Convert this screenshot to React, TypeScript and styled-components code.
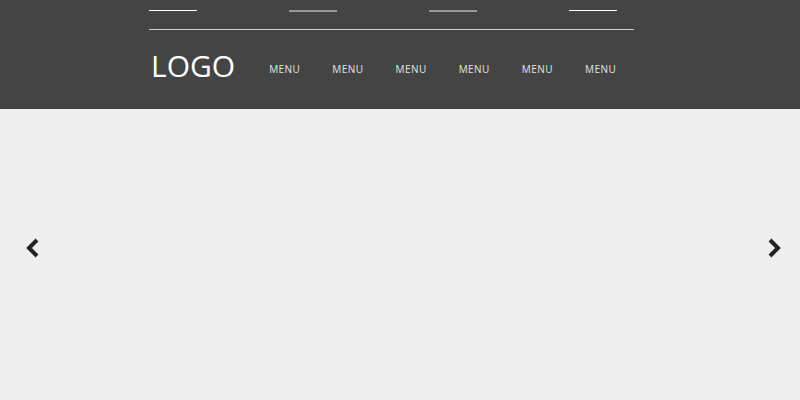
import styled, { createGlobalStyle } from "styled-components";

const GlobalStyle = createGlobalStyle`
  html, body {
    margin: 0;
    padding: 0;
    background: #eeeeee;
    font-family: "Open Sans", "Liberation Sans", sans-serif;
  }
`

const Header = styled.header`
  background: #444444;
  height: 109px;
  padding-left: 149px;
  box-sizing: border-box;
`

const HeaderInner = styled.div`
  width: 485px;
`

const TabRow = styled.div`
  display: grid;
  grid-template-columns: repeat(4, 140px);
  height: 30px;
  padding-top: 10px;
  box-sizing: border-box;
  border-bottom: 1px solid #cccccc;
`

const Tab = styled.span<{ active: boolean }>`
  display: block;
  width: 48px;
  height: ${({ active }) => active ? "1px" : "2px"};
  background: ${({ active }) => active ? "#ffffff" : "#999999"};
`

const NavRow = styled.div`
  display: flex;
  align-items: flex-start;
`

const Logo = styled.h1`
  margin: 21px 34px 0 2px;
  font-size: 30px;
  font-weight: 400;
  line-height: 30px;
  color: #ffffff;
`

const Menu = styled.nav`
  display: flex;
  gap: 32px;
  margin-top: 34px;
`

const MenuItem = styled.a`
  font-size: 10px;
  line-height: 10px;
  letter-spacing: 0.45px;
  color: #e4e4e4;
  cursor: pointer;
`

const Slider = styled.section`
  height: 291px;
  display: flex;
  align-items: center;
  justify-content: space-between;
  padding: 0 18px 14px 25px;
  box-sizing: border-box;
`

const Arrow = styled.button`
  border: none;
  background: none;
  padding: 0;
  display: flex;
  color: #222222;
  cursor: pointer;
`

const Chevron = ({ direction }: { direction: "left" | "right" }) => (
  <svg width="14" height="20" viewBox="0 0 14 20">
    <polyline
      points={direction === "left" ? "12,2 4,10 12,18" : "2,2 10,10 2,18"}
      fill="none"
      stroke="currentColor"
      strokeWidth="4"
      strokeLinejoin="miter"
    />
  </svg>
)

export default function App() {
  const tabs = [true, false, false, true]
  const menus = ["MENU", "MENU", "MENU", "MENU", "MENU", "MENU"]

  return (
    <>
      <GlobalStyle />
      <Header>
        <HeaderInner>
          <TabRow>
            {tabs.map((active, index) => (
              <Tab key={index} active={active} />
            ))}
          </TabRow>
          <NavRow>
            <Logo>LOGO</Logo>
            <Menu>
              {menus.map((label, index) => (
                <MenuItem key={index}>{label}</MenuItem>
              ))}
            </Menu>
          </NavRow>
        </HeaderInner>
      </Header>
      <Slider>
        <Arrow aria-label="previous"><Chevron direction="left" /></Arrow>
        <Arrow aria-label="next"><Chevron direction="right" /></Arrow>
      </Slider>
    </>
  );
}
